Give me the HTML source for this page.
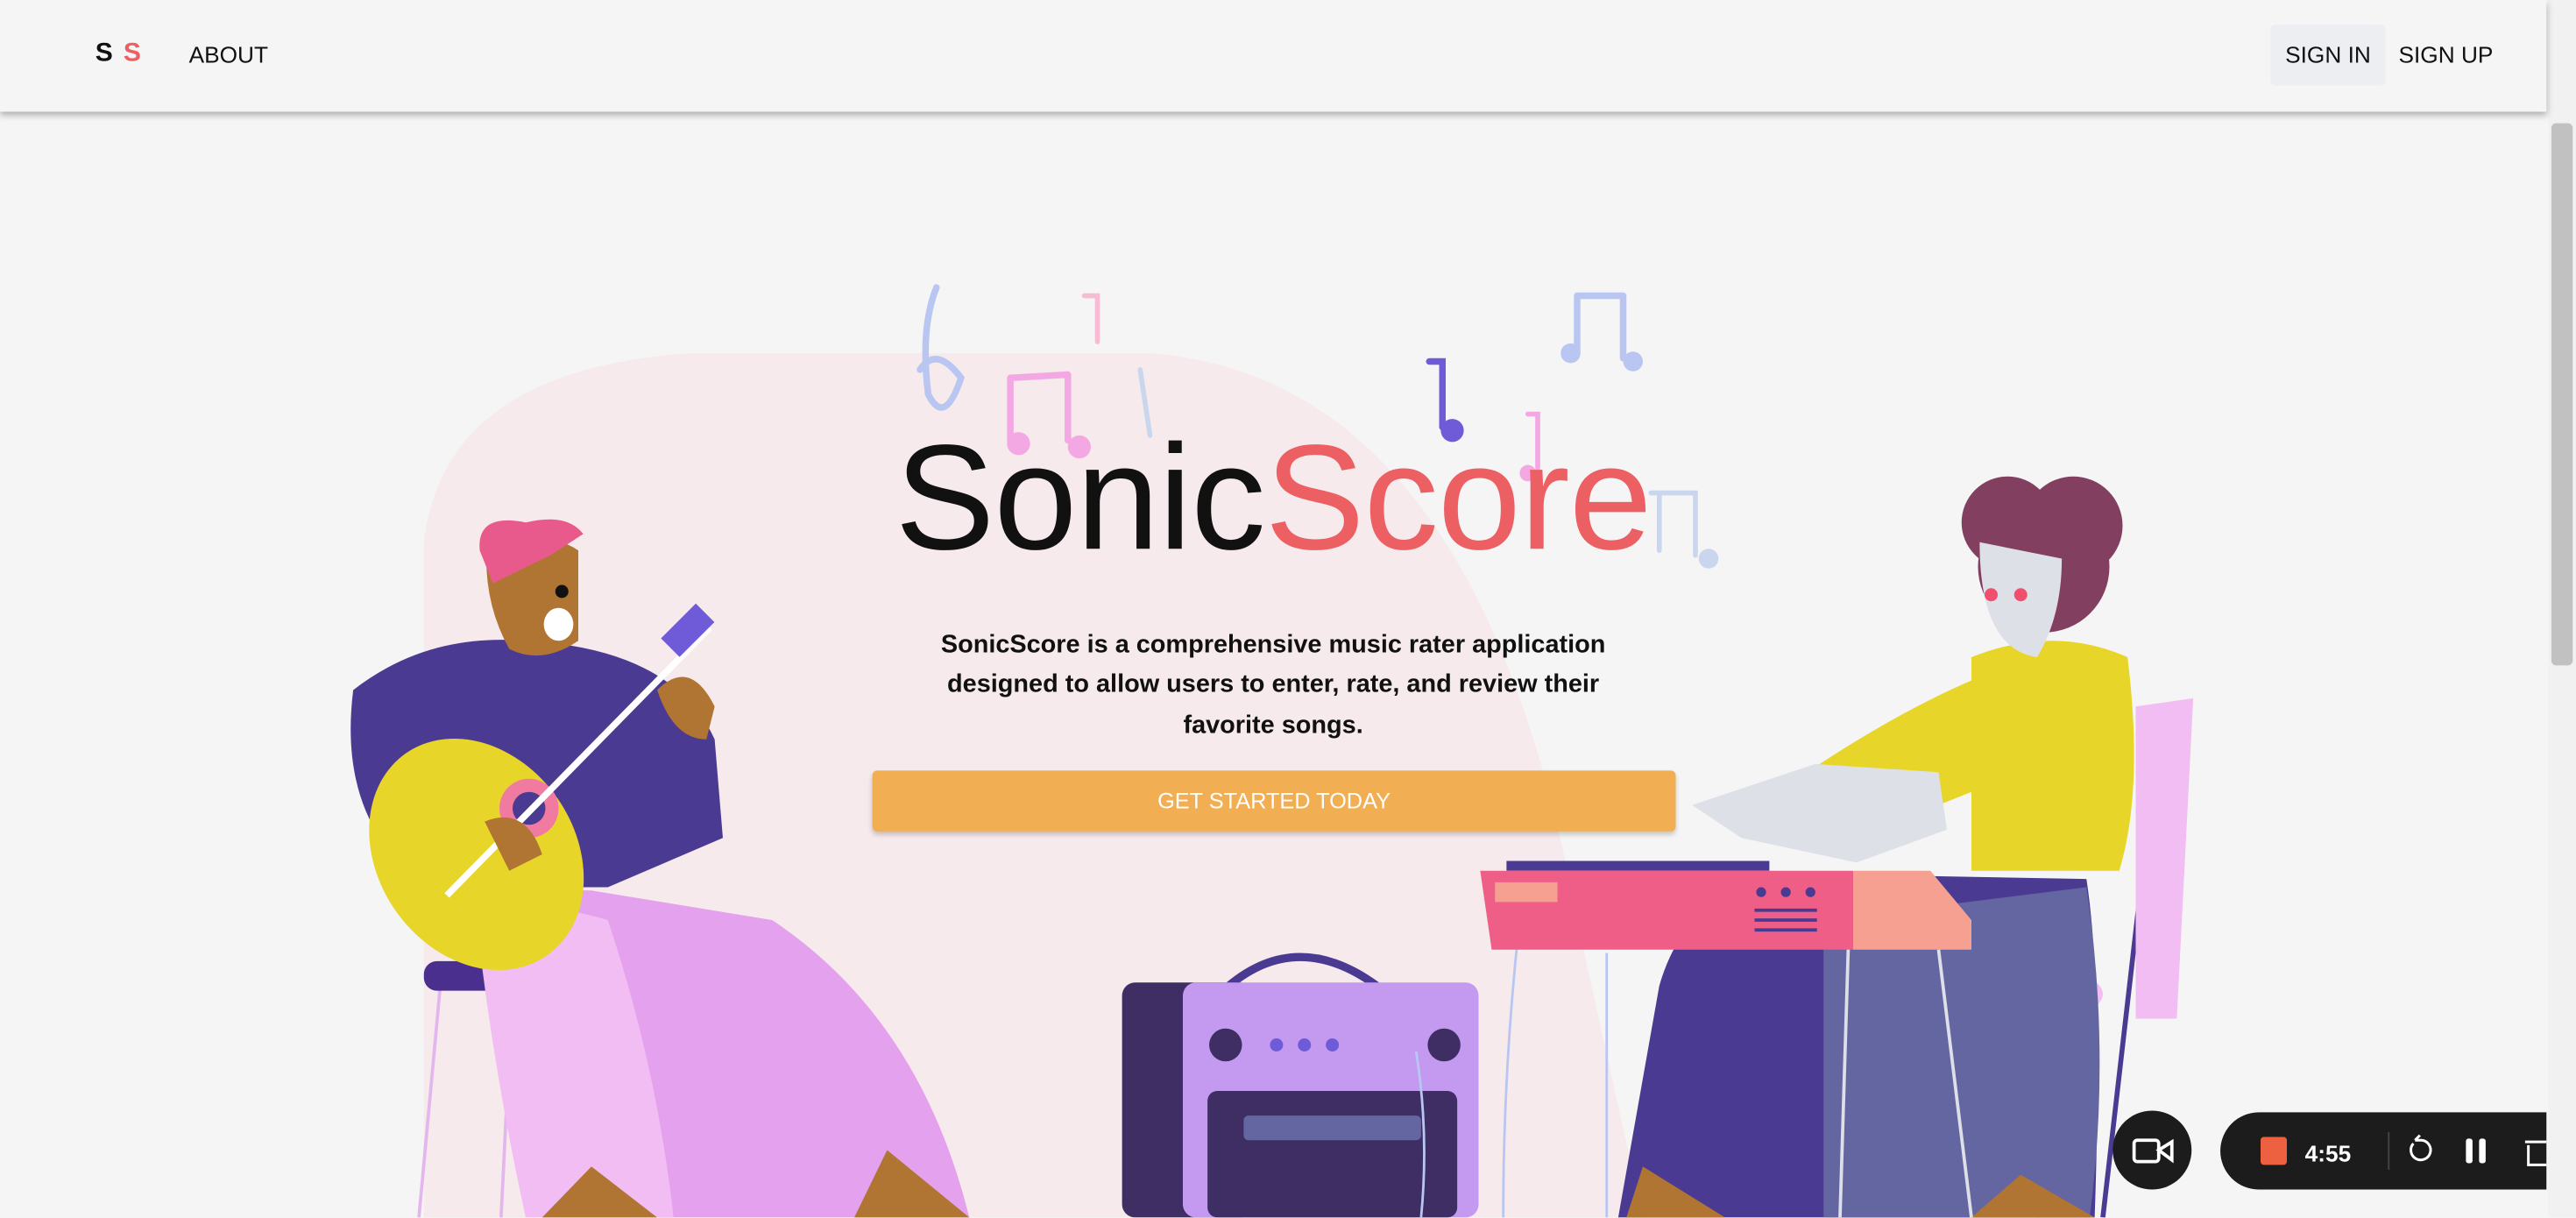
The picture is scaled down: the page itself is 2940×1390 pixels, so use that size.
<!DOCTYPE html>
<html><head><meta charset="utf-8"><style>
html,body{margin:0;padding:0;width:2940px;height:1390px;overflow:hidden;background:#f5f5f5}
#w{position:absolute;left:0;top:0;width:1568px;height:741px;transform:scale(1.875);transform-origin:0 0;font-family:"Liberation Sans",Arial,sans-serif;background:#f5f5f5;overflow:hidden}
.abs{position:absolute}
#hdr{left:0;top:0;width:1550px;height:68px;background:#f5f5f5;box-shadow:0 2px 4px rgba(0,0,0,.3);z-index:5}
.nav{font-size:14px;color:#111;top:25px}
h1{position:absolute;left:0;width:1550px;top:252px;margin:0;text-align:center;font-weight:300;font-size:91px;letter-spacing:-0.5px;color:#111;z-index:3}
p{position:absolute;left:475px;width:600px;top:381px;margin:0;text-align:center;font-weight:bold;font-size:15.4px;line-height:24.3px;color:#111;z-index:3;white-space:nowrap}
#btn{left:531px;top:469px;width:489px;height:37px;background:#f2ae52;border-radius:3px;box-shadow:0 2px 3px rgba(0,0,0,.2);color:#fff;font-size:13.5px;text-align:center;line-height:37px;z-index:3}
</style></head><body><div id="w">
<svg class="abs" style="left:0;top:0" width="1568" height="741" viewBox="0 0 1568 741">
<path d="M258 741 L258 330 Q270 225 420 215 L700 215 Q900 230 960 560 L1000 741 Z" fill="#f6eaec"/>
<g fill="none" stroke-width="4" stroke-linecap="round">
<path d="M570 175 Q560 200 565 240 Q575 260 585 230 Q570 210 560 225" stroke="#b9c6f2"/>
<path d="M615 230 L650 228 M615 230 L615 268 M650 228 L650 268" stroke="#f3a8e3"/>
<path d="M870 220 L878 220 L878 260" stroke="#6f5ad8"/>
<path d="M960 180 L988 180 M960 180 L960 215 M988 180 L988 218" stroke="#b9c6f2"/>
<path d="M660 180 L668 180 L668 208" stroke="#f7bcd3" stroke-width="3"/>
<path d="M930 252 L936 252 L936 285" stroke="#f3a8e3" stroke-width="3"/>
<path d="M1005 300 L1032 300 L1032 338 M1010 300 L1010 335" stroke="#c9d6ee" stroke-width="3"/>
<path d="M694 225 L700 265" stroke="#c9d6ee" stroke-width="3"/>
</g>
<g fill="#b9c6f2"><circle cx="956" cy="215" r="6"/><circle cx="994" cy="220" r="6"/></g>
<g fill="#f3a8e3"><circle cx="620" cy="270" r="7"/><circle cx="657" cy="272" r="7"/><circle cx="930" cy="288" r="5"/></g>
<circle cx="884" cy="262" r="7" fill="#6f5ad8"/><circle cx="1040" cy="340" r="6" fill="#c9d6ee"/>
<path d="M255 741 L268 600 M305 741 L312 600" stroke="#e3b6ee" stroke-width="2"/>
<rect x="258" y="585" width="70" height="18" rx="8" fill="#4a2f8f"/>
<path d="M290 560 Q300 540 360 542 L470 560 Q560 620 590 741 L330 741 Q300 650 290 560Z" fill="#e3a1ee"/>
<path d="M290 560 Q320 545 370 560 Q400 650 410 741 L320 741 Q300 650 290 560Z" fill="#f2bdf2"/>
<path d="M330 741 L360 710 L400 741Z M520 741 L540 700 L590 741Z" fill="#b07433"/>
<path d="M215 420 Q260 385 320 390 Q410 395 435 450 L440 510 L370 540 L260 540 Q205 500 215 420Z" fill="#4b3a91"/>
<path d="M296 340 Q330 320 352 335 L352 390 Q330 405 310 395 Q296 370 296 340Z" fill="#b07433"/>
<path d="M292 335 Q290 312 320 318 Q345 312 355 325 L335 338 L300 355Z" fill="#e95a8c"/>
<ellipse cx="340" cy="380" rx="9" ry="10" fill="#fff"/>
<circle cx="342" cy="360" r="4" fill="#111"/>
<ellipse cx="290" cy="520" rx="60" ry="75" fill="#e8d52a" transform="rotate(-35 290 520)"/>
<circle cx="322" cy="492" r="18" fill="#f07aa0"/><circle cx="322" cy="492" r="10" fill="#4b3a91"/>
<path d="M272 545 L432 382" stroke="#fff" stroke-width="4"/>
<rect x="405" y="375" width="30" height="16" fill="#6f5ad8" transform="rotate(-45 420 385)"/>
<path d="M400 420 Q420 400 435 430 L430 450 Q410 450 400 420Z" fill="#b07433"/>
<path d="M295 500 Q320 490 330 520 L310 530Z" fill="#b07433"/>
<path d="M748 600 Q790 565 838 600" stroke="#4b3a91" stroke-width="5" fill="none"/>
<rect x="683" y="598" width="80" height="143" rx="8" fill="#3e2e63"/>
<rect x="720" y="598" width="180" height="143" rx="8" fill="#c49af0"/>
<circle cx="746" cy="636" r="10" fill="#3e2e63"/><circle cx="879" cy="636" r="10" fill="#3e2e63"/>
<circle cx="777" cy="636" r="4" fill="#6f5ad8"/><circle cx="794" cy="636" r="4" fill="#6f5ad8"/><circle cx="811" cy="636" r="4" fill="#6f5ad8"/>
<rect x="735" y="664" width="152" height="77" rx="6" fill="#3e2e63"/>
<rect x="757" y="679" width="108" height="15" rx="3" fill="#6466a2"/>
<path d="M862 640 Q870 690 865 741 M925 560 Q915 650 915 741 M978 580 L978 741" stroke="#b9c6f2" stroke-width="1.5" fill="none"/>
<path d="M1240 741 L1260 620 M1280 741 L1310 480" stroke="#4b3a91" stroke-width="3"/>
<path d="M1300 430 L1335 425 L1325 620 L1300 620Z" fill="#f2bdf2"/>
<ellipse cx="1250" cy="605" rx="30" ry="14" fill="#f2bdf2"/>
<path d="M1010 600 Q1030 530 1110 532 L1270 535 Q1280 600 1275 741 L985 741Z" fill="#4b3a91"/>
<path d="M1110 560 L1270 540 Q1285 640 1272 741 L1110 741Z" fill="#6466a2"/>
<path d="M990 741 L1000 710 L1050 741Z M1200 741 L1230 715 L1275 741Z" fill="#b07433"/>
<path d="M1200 400 Q1250 380 1295 400 Q1305 480 1290 530 L1200 530 Z" fill="#e8d52a"/>
<path d="M1100 470 Q1160 430 1210 410 L1230 470 L1180 490 L1100 495Z" fill="#e8d52a"/>
<path d="M1030 490 L1105 465 L1180 470 L1185 505 L1130 525 L1060 510Z" fill="#dde0e6"/>
<circle cx="1222" cy="318" r="28" fill="#833f5f"/><circle cx="1262" cy="320" r="30" fill="#833f5f"/>
<circle cx="1244" cy="345" r="40" fill="#833f5f"/>
<path d="M1205 330 Q1205 395 1240 400 Q1255 375 1255 340Z" fill="#dde0e6"/>
<circle cx="1212" cy="362" r="4" fill="#f0506e"/><circle cx="1230" cy="362" r="4" fill="#f0506e"/>
<rect x="917" y="524" width="160" height="6" fill="#4b3a91"/>
<path d="M901 530 L1128 530 L1128 578 L908 578Z" fill="#ef5e87"/>
<path d="M1128 530 L1175 530 L1200 560 L1200 578 L1128 578Z" fill="#f5a090"/>
<rect x="910" y="537" width="38" height="12" fill="#f5a090"/>
<circle cx="1072" cy="543" r="3" fill="#4b3a91"/><circle cx="1087" cy="543" r="3" fill="#4b3a91"/><circle cx="1102" cy="543" r="3" fill="#4b3a91"/>
<path d="M1068 554 H1106 M1068 560 H1106 M1068 566 H1106" stroke="#4b3a91" stroke-width="2"/>
<path d="M1125 578 L1120 741 M1180 578 L1200 741" stroke="#dde0e6" stroke-width="2"/>
<circle cx="1310" cy="700" r="24" fill="#1c1c1c"/>
<rect x="1299" y="694" width="15" height="13" rx="2" fill="none" stroke="#fff" stroke-width="2"/>
<path d="M1314 700 L1322 695 L1322 706Z" fill="none" stroke="#fff" stroke-width="2"/>
<path d="M1375 677 L1550 677 L1550 724 L1375 724 A23.5 23.5 0 0 1 1375 677Z" fill="#1c1c1c"/>
<rect x="1376" y="692" width="16" height="17" rx="2" fill="#ee6140"/>
<text x="1403" y="707" font-family="Liberation Sans" font-weight="bold" font-size="14" fill="#fff">4:55</text>
<line x1="1454" y1="689" x2="1454" y2="712" stroke="#444" stroke-width="1"/>
<path d="M1469 696 A6 6 0 1 0 1474 694 L1470 694 M1470 694 L1473 691" stroke="#fff" stroke-width="1.6" fill="none"/>
<rect x="1501" y="693" width="4" height="15" rx="1.5" fill="#fff"/><rect x="1509" y="693" width="4" height="15" rx="1.5" fill="#fff"/>
<path d="M1537 695 H1550 M1539 697 V709 H1550" stroke="#fff" stroke-width="1.6" fill="none"/>
<rect x="1551" y="0" width="17" height="741" fill="#f1f1f1"/>
<rect x="1553" y="75" width="13" height="330" rx="3" fill="#c1c1c1"/>
</svg>
<div id="hdr" class="abs">
<div class="abs" style="left:58px;top:24px;font-size:16px;font-weight:bold;letter-spacing:1px"><span style="color:#111">S</span> <span style="color:#ec5f63">S</span></div>
<div class="abs nav" style="left:115px">ABOUT</div>
<div class="abs" style="left:1382px;top:15px;width:70px;height:37px;background:#eceef2;border-radius:3px"></div>
<div class="abs nav" style="left:1391px">SIGN IN</div>
<div class="abs nav" style="left:1460px">SIGN UP</div>
</div>
<h1><span>Sonic</span><span style="color:#ec5f63">Score</span></h1>
<p>SonicScore is a comprehensive music rater application<br>designed to allow users to enter, rate, and review their<br>favorite songs.</p>
<div id="btn" class="abs">GET STARTED TODAY</div>
</div></body></html>
